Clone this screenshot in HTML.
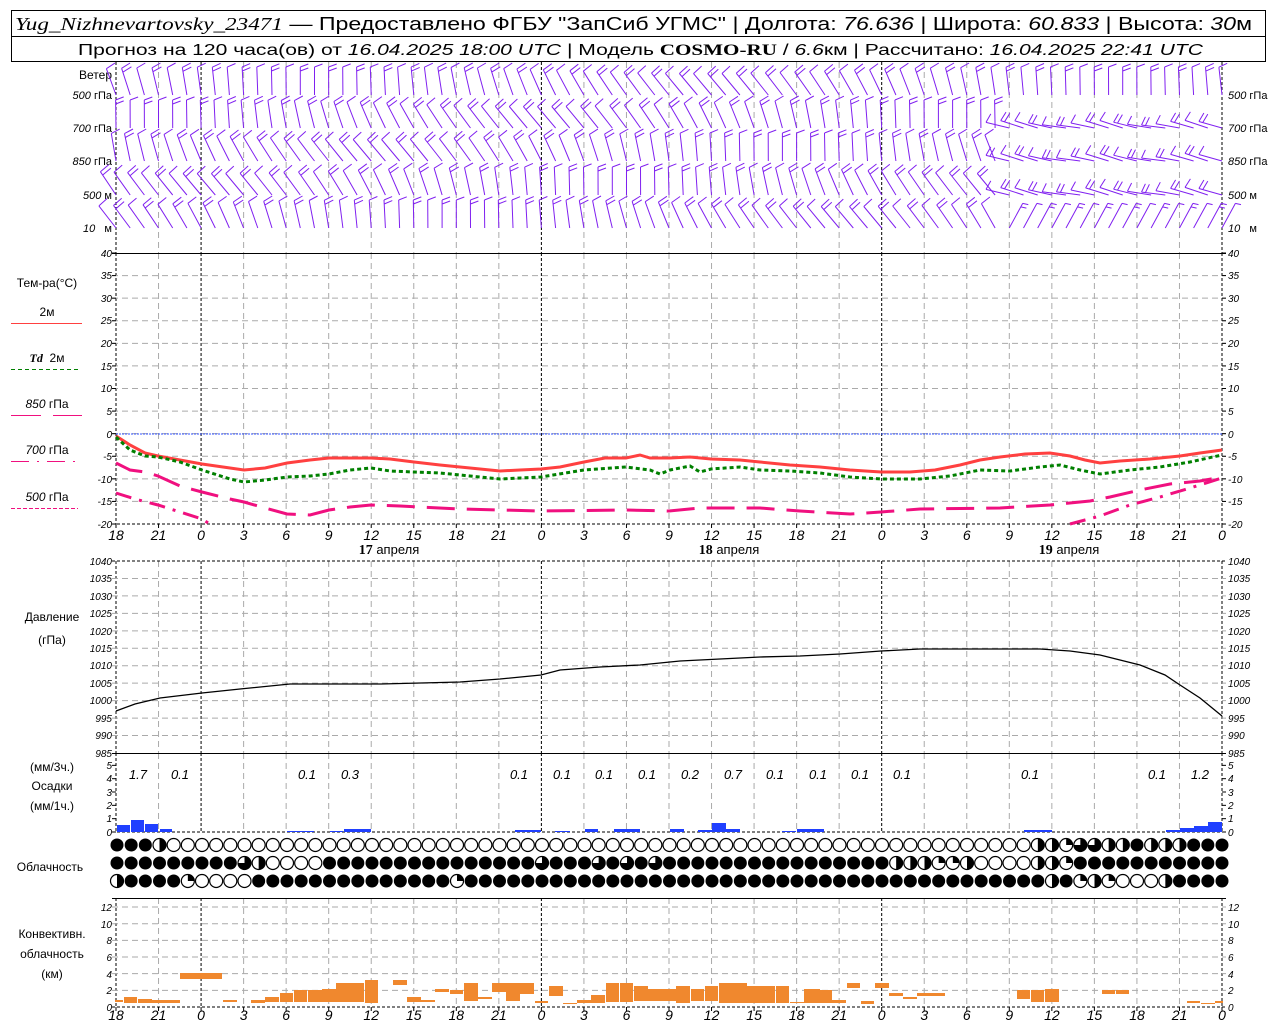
<!DOCTYPE html>
<html><head><meta charset="utf-8">
<style>
html,body{margin:0;padding:0;background:#fff;width:1280px;height:1024px;overflow:hidden}
svg{display:block}
text{font-family:"Liberation Sans",sans-serif;fill:#000}
.tl text,.tr text{font-size:10px;font-style:italic}
.tl text{text-anchor:end}
.lab{font-size:12px;text-anchor:middle}
.ax{font-size:14px;font-style:italic;text-anchor:middle}
.pr{font-size:13px;font-style:italic;text-anchor:middle}
</style></head><body>
<svg id="g" width="1280" height="1024" viewBox="0 0 1280 1024" xmlns="http://www.w3.org/2000/svg">
<rect x="11.5" y="10.5" width="1254" height="51" fill="none" stroke="#000"/>
<line x1="11" y1="36.5" x2="1265" y2="36.5" stroke="#000"/>
<text x="15" y="30" font-size="18" textLength="1237" lengthAdjust="spacingAndGlyphs"><tspan font-family="Liberation Serif" font-style="italic">Yug_Nizhnevartovsky_23471</tspan> — Предоставлено ФГБУ "ЗапСиб УГМС" | Долгота: <tspan font-style="italic">76.636</tspan> | Широта: <tspan font-style="italic">60.833</tspan> | Высота: <tspan font-style="italic">30</tspan>м</text>
<text x="78" y="55" font-size="16" textLength="1125" lengthAdjust="spacingAndGlyphs">Прогноз на 120 часа(ов) от <tspan font-style="italic">16.04.2025 18:00 UTC</tspan> | Модель <tspan font-weight="bold" font-family="Liberation Serif">COSMO-RU</tspan> / <tspan font-style="italic">6.6</tspan>км | Рассчитано: <tspan font-style="italic">16.04.2025 22:41 UTC</tspan></text>

<g id="grid"></g>

<text x="112" y="79" font-size="12" text-anchor="end">Ветер</text>
<g font-size="11" text-anchor="end">
<text x="112" y="99"><tspan font-style="italic">500</tspan> гПа</text>
<text x="112" y="132"><tspan font-style="italic">700</tspan> гПа</text>
<text x="112" y="165"><tspan font-style="italic">850</tspan> гПа</text>
<text x="112" y="199"><tspan font-style="italic">500</tspan> м</text>
<text x="112" y="232"><tspan font-style="italic">10</tspan>&#160;&#160; м</text>
</g>
<g font-size="11">
<text x="1228" y="99"><tspan font-style="italic">500</tspan> гПа</text>
<text x="1228" y="132"><tspan font-style="italic">700</tspan> гПа</text>
<text x="1228" y="165"><tspan font-style="italic">850</tspan> гПа</text>
<text x="1228" y="199"><tspan font-style="italic">500</tspan> м</text>
<text x="1228" y="232"><tspan font-style="italic">10</tspan>&#160;&#160; м</text>
</g>

<text class="lab" x="47" y="287" font-size="13">Тем-ра(°C)</text>
<text class="lab" x="47" y="316" font-size="11">2м</text>
<line x1="11" y1="323.5" x2="82" y2="323.5" stroke="#ff4040"/>
<text class="lab" x="47" y="362" font-size="11"><tspan font-style="italic" font-weight="bold" font-family="Liberation Serif">Td</tspan>&#160; 2м</text>
<line x1="11" y1="369.5" x2="78" y2="369.5" stroke="#008000" stroke-dasharray="4,3"/>
<text class="lab" x="47" y="408" font-size="11"><tspan font-style="italic">850</tspan> гПа</text>
<line x1="11" y1="415.5" x2="82" y2="415.5" stroke="#f0107f" stroke-dasharray="30,12"/>
<text class="lab" x="47" y="454" font-size="11"><tspan font-style="italic">700</tspan> гПа</text>
<line x1="11" y1="461.5" x2="78" y2="461.5" stroke="#f0107f" stroke-dasharray="18,8,2,8"/>
<text class="lab" x="47" y="501" font-size="11"><tspan font-style="italic">500</tspan> гПа</text>
<line x1="11" y1="508.5" x2="78" y2="508.5" stroke="#f0107f" stroke-dasharray="4,2"/>

<text class="lab" x="52" y="621" font-size="13">Давление</text>
<text class="lab" x="52" y="644" font-size="13">(гПа)</text>
<text class="lab" x="52" y="771" font-size="12">(мм/3ч.)</text>
<text class="lab" x="52" y="790" font-size="12">Осадки</text>
<text class="lab" x="52" y="810" font-size="12">(мм/1ч.)</text>
<text class="lab" x="50" y="871" font-size="12">Облачность</text>
<text class="lab" x="52" y="938" font-size="12">Конвективн.</text>
<text class="lab" x="52" y="958" font-size="12">облачность</text>
<text class="lab" x="52" y="978" font-size="12">(км)</text>

<g class="tl">
<text x="112" y="257">40</text><text x="112" y="279">35</text><text x="112" y="302">30</text><text x="112" y="324">25</text><text x="112" y="347">20</text><text x="112" y="370">15</text><text x="112" y="392">10</text><text x="112" y="415">5</text><text x="112" y="438">0</text><text x="112" y="460">-5</text><text x="112" y="483">-10</text><text x="112" y="505">-15</text><text x="112" y="528">-20</text>
<text x="112" y="565">1040</text><text x="112" y="582">1035</text><text x="112" y="600">1030</text><text x="112" y="617">1025</text><text x="112" y="635">1020</text><text x="112" y="652">1015</text><text x="112" y="669">1010</text><text x="112" y="687">1005</text><text x="112" y="704">1000</text><text x="112" y="722">995</text><text x="112" y="739">990</text><text x="112" y="757">985</text>
<text x="112" y="769">5</text><text x="112" y="782">4</text><text x="112" y="796">3</text><text x="112" y="809">2</text><text x="112" y="822">1</text><text x="112" y="836">0</text>
<text x="112" y="911">12</text><text x="112" y="928">10</text><text x="112" y="944">8</text><text x="112" y="961">6</text><text x="112" y="978">4</text><text x="112" y="994">2</text><text x="112" y="1011">0</text>
</g>
<g class="tr">
<text x="1228" y="257">40</text><text x="1228" y="279">35</text><text x="1228" y="302">30</text><text x="1228" y="324">25</text><text x="1228" y="347">20</text><text x="1228" y="370">15</text><text x="1228" y="392">10</text><text x="1228" y="415">5</text><text x="1228" y="438">0</text><text x="1228" y="460">-5</text><text x="1228" y="483">-10</text><text x="1228" y="505">-15</text><text x="1228" y="528">-20</text>
<text x="1228" y="565">1040</text><text x="1228" y="582">1035</text><text x="1228" y="600">1030</text><text x="1228" y="617">1025</text><text x="1228" y="635">1020</text><text x="1228" y="652">1015</text><text x="1228" y="669">1010</text><text x="1228" y="687">1005</text><text x="1228" y="704">1000</text><text x="1228" y="722">995</text><text x="1228" y="739">990</text><text x="1228" y="757">985</text>
<text x="1228" y="769">5</text><text x="1228" y="782">4</text><text x="1228" y="796">3</text><text x="1228" y="809">2</text><text x="1228" y="822">1</text><text x="1228" y="836">0</text>
<text x="1228" y="911">12</text><text x="1228" y="928">10</text><text x="1228" y="944">8</text><text x="1228" y="961">6</text><text x="1228" y="978">4</text><text x="1228" y="994">2</text><text x="1228" y="1011">0</text>
</g>

<g class="ax">
<text x="116" y="540">18</text><text x="158.5" y="540">21</text><text x="201" y="540">0</text><text x="243.6" y="540">3</text><text x="286.2" y="540">6</text><text x="328.7" y="540">9</text><text x="371.2" y="540">12</text><text x="413.8" y="540">15</text><text x="456.3" y="540">18</text><text x="498.9" y="540">21</text><text x="541.4" y="540">0</text><text x="583.9" y="540">3</text><text x="626.5" y="540">6</text><text x="669" y="540">9</text><text x="711.6" y="540">12</text><text x="754.1" y="540">15</text><text x="796.6" y="540">18</text><text x="839.2" y="540">21</text><text x="881.7" y="540">0</text><text x="924.3" y="540">3</text><text x="966.8" y="540">6</text><text x="1009.3" y="540">9</text><text x="1051.9" y="540">12</text><text x="1094.4" y="540">15</text><text x="1137" y="540">18</text><text x="1179.5" y="540">21</text><text x="1222" y="540">0</text>
</g>
<g class="ax">
<text x="116" y="1020">18</text><text x="158.5" y="1020">21</text><text x="201" y="1020">0</text><text x="243.6" y="1020">3</text><text x="286.2" y="1020">6</text><text x="328.7" y="1020">9</text><text x="371.2" y="1020">12</text><text x="413.8" y="1020">15</text><text x="456.3" y="1020">18</text><text x="498.9" y="1020">21</text><text x="541.4" y="1020">0</text><text x="583.9" y="1020">3</text><text x="626.5" y="1020">6</text><text x="669" y="1020">9</text><text x="711.6" y="1020">12</text><text x="754.1" y="1020">15</text><text x="796.6" y="1020">18</text><text x="839.2" y="1020">21</text><text x="881.7" y="1020">0</text><text x="924.3" y="1020">3</text><text x="966.8" y="1020">6</text><text x="1009.3" y="1020">9</text><text x="1051.9" y="1020">12</text><text x="1094.4" y="1020">15</text><text x="1137" y="1020">18</text><text x="1179.5" y="1020">21</text><text x="1222" y="1020">0</text>
</g>
<g font-size="13" text-anchor="middle">
<text x="389" y="554"><tspan font-weight="bold" font-family="Liberation Serif" font-size="14">17</tspan> апреля</text>
<text x="729" y="554"><tspan font-weight="bold" font-family="Liberation Serif" font-size="14">18</tspan> апреля</text>
<text x="1069" y="554"><tspan font-weight="bold" font-family="Liberation Serif" font-size="14">19</tspan> апреля</text>
</g>

<g class="pr">
<text x="138" y="779">1.7</text><text x="180" y="779">0.1</text><text x="307" y="779">0.1</text><text x="350" y="779">0.3</text><text x="519" y="779">0.1</text><text x="562" y="779">0.1</text><text x="604" y="779">0.1</text><text x="647" y="779">0.1</text><text x="690" y="779">0.2</text><text x="733" y="779">0.7</text><text x="775" y="779">0.1</text><text x="818" y="779">0.1</text><text x="860" y="779">0.1</text><text x="902" y="779">0.1</text><text x="1030" y="779">0.1</text><text x="1157" y="779">0.1</text><text x="1200" y="779">1.2</text>
</g>

<line x1="116" y1="434" x2="1222" y2="434" stroke="#3050ff" stroke-dasharray="2,1"/>
<polyline fill="none" stroke="#ff4040" stroke-width="3" points="116,436 130,445 145,453 158,456 180,460 202,464 230,468 244,470 265,468 287,463 310,460 329,458 350,458 371,458 390,459 414,462 440,465 460,467 500,471 520,470 541,469 560,467 584,462 605,458 626,458 640,455 650,458 670,458 690,457 711,459 740,460 760,462 790,465 820,467 850,470 881,472 910,472 935,470 960,465 980,460 1000,457 1025,454 1050,453 1070,456 1085,460 1100,463 1120,461 1150,459 1180,456 1200,453 1222,450"/>
<polyline fill="none" stroke="#008000" stroke-width="3" stroke-dasharray="4,3" points="116,437 130,450 145,456 158,457 180,462 202,470 230,479 244,482 265,480 287,477 310,476 329,474 350,470 371,468 390,471 414,472 440,473 460,475 500,479 541,477 584,470 626,467 650,470 660,474 670,470 690,466 700,472 711,469 740,467 760,470 790,471 820,473 850,477 881,479 920,479 950,476 980,470 1010,471 1040,467 1060,465 1080,470 1100,474 1130,470 1160,467 1190,462 1222,455"/>
<polyline fill="none" stroke="#f0107f" stroke-width="3" stroke-dasharray="28,12" points="116,463 130,470 145,472 158,476 180,486 202,492 230,499 244,502 265,508 287,514 310,515 329,510 350,507 371,505 400,506 460,509 541,511 626,510 669,511 700,508 760,508 800,511 850,514 881,512 920,509 1000,508 1050,505 1090,501 1110,497 1140,490 1170,484 1200,481 1222,477"/>
<polyline fill="none" stroke="#f0107f" stroke-width="3" stroke-dasharray="16,8,3,8" points="116,493 135,499 158,505 180,512 202,519 213,526"/>
<polyline fill="none" stroke="#f0107f" stroke-width="3" stroke-dasharray="16,8,3,8" points="1070,524 1100,516 1130,505 1160,497 1190,488 1222,478"/>
<polyline fill="none" stroke="#000" stroke-width="1.3" points="116,711 135,704 160,698 202,693 240,689 290,684 380,684 460,682 500,679 541,675 560,670 600,667 640,665 680,661 720,659 760,657 800,656 840,654 881,651 920,649 1040,649 1070,651 1100,655 1140,665 1165,675 1180,685 1200,698 1222,716"/>
<g id="bars"></g>
<g id="barbs" stroke="#8020f0" stroke-width="1" fill="none"></g>
<g id="clouds"></g>
</svg>
<script>
const NS='http://www.w3.org/2000/svg';
function el(t,a,p){const e=document.createElementNS(NS,t);for(const k in a)e.setAttribute(k,a[k]);p.appendChild(e);return e;}
const G=document.getElementById('grid');
const gx=k=>116+k*1106/26;
const panels=[[62,253],[253,524],[561,753],[753,832],[898,1007]];
for(let k=0;k<=26;k++){const x=gx(k);const day=(k%8==2)||k==0||k==26;
 for(const [a,b] of panels){el('line',{x1:x,y1:a,x2:x,y2:b,stroke:day?'#000':'#aaa','stroke-dasharray':day?'3,2':'6,4'},G);}
 el('line',{x1:x,y1:524,x2:x,y2:528,stroke:'#000'},G);el('line',{x1:x,y1:1007,x2:x,y2:1011,stroke:'#000'},G);
}
function hl(y,solid,black){el('line',{x1:112,y1:y,x2:1226,y2:y,stroke:black?'#000':'#aaa','stroke-dasharray':solid?'none':(black?'3,2':'6,4')},G);}
for(let t=35;t>=-15;t-=5){hl(253+(40-t)*4.517,false,false);}
for(let p=1035;p>=990;p-=5){hl(561+(1040-p)*192/55,false,false);}
for(let c=2;c<=12;c+=2){hl(1007-c*8.33,false,false);}
hl(253.5,true,true);hl(524,false,true);hl(561,false,true);hl(753.5,true,true);hl(832,false,true);hl(898.5,true,true);hl(1007,false,true);
for(let t=40;t>=-20;t-=5){const y=253+(40-t)*4.517;el('line',{x1:112,y1:y,x2:116,y2:y,stroke:'#000'},G);el('line',{x1:1222,y1:y,x2:1226,y2:y,stroke:'#000'},G);}
for(let i=0;i<=5;i++){const y=832-i*13.33;el('line',{x1:112,y1:y,x2:116,y2:y,stroke:'#000'},G);el('line',{x1:1222,y1:y,x2:1226,y2:y,stroke:'#000'},G);}
const B=document.getElementById('bars');
const pb=[[117,130,825],[131,144,820],[145,158,824],[160,172,829],[287,314,831],[330,343,831],[344,371,829],[515,541,830],[555,570,831],[585,598,829],[614,640,829],[670,684,829],[698,712,830],[712,726,823],[726,740,829],[782,796,831],[797,824,829],[1024,1052,830],[1166,1180,830],[1180,1194,828],[1194,1208,826],[1208,1222,822]];
for(const [a,b,y] of pb)el('rect',{x:a,y:y,width:b-a,height:832-y,fill:'#2040ff'},B);
const cb=[[115,123,1000,1002],[124,137,997,1003],[138,152,999,1003],[152,180,1000,1003],[180,222,973,979],[223,237,1000,1002],[251,265,1000,1003],[265,279,997,1002],[280,293,993,1002],[294,307,990,1002],[308,322,990,1002],[322,336,989,1002],[336,364,983,1002],[365,378,980,1003],[393,407,980,985],[407,421,997,1002],[421,435,1000,1002],[435,449,989,992],[450,463,990,994],[464,478,983,1001],[478,492,997,999],[492,506,983,992],[506,520,983,1001],[520,534,983,994],[535,548,1001,1003],[549,563,986,996],[563,577,1003,1004],[577,591,1000,1003],[591,605,995,1003],[606,619,983,1002],[620,633,983,1002],[634,648,986,1001],[648,676,989,1001],[676,690,986,1003],[691,704,989,1001],[705,718,986,1001],[719,747,983,1003],[747,775,986,1003],[776,789,986,1003],[790,804,1002,1003],[804,820,989,1003],[820,832,990,1003],[832,846,1000,1003],[847,860,983,988],[861,874,1001,1004],[875,889,983,988],[889,903,993,996],[903,917,997,999],[917,945,993,996],[1017,1030,990,999],[1031,1044,990,1002],[1045,1059,989,1002],[1102,1115,990,994],[1116,1129,990,994],[1187,1200,1001,1003],[1201,1215,1003,1004],[1215,1223,1001,1003]];
for(const [a,b,t,bt] of cb)el('rect',{x:a,y:t,width:b-a,height:Math.max(1,bt-t),fill:'#f0882e'},B);
const W=document.getElementById('barbs');
const rows=[95,128,161,195,228];
for(let l=0;l<5;l++){for(let h=0;h<=78;h++){
 const x=116+h*1106/78, y=rows[l];
 let a=-0.35+0.35*Math.sin(h/9+l*1.3);
 let L=28;
 if(h>62&&l>0&&l<4){a=-1.35+0.1*Math.sin(h);L=24;}
 if(h>62&&l==4){a=0.5;}
 const ex=x+L*Math.sin(a), ey=y-L*Math.cos(a);
 let d='M'+x.toFixed(1)+' '+y+' L'+ex.toFixed(1)+' '+ey.toFixed(1);
 const n=1+((h+l)%2);
 for(let i=0;i<n;i++){const px=ex-i*4*Math.sin(a),py=ey+i*4*Math.cos(a);
  const tx=px+8*Math.cos(a)-3*Math.sin(a),ty=py+8*Math.sin(a)-3*Math.cos(a);
  d+=' M'+px.toFixed(1)+' '+py.toFixed(1)+' L'+tx.toFixed(1)+' '+ty.toFixed(1);}
 el('path',{d:d},W);
}}
const C=document.getElementById('clouds');
const r1='FFFH'+'E'.repeat(61)+'HHqQQHHFHHHFFF';
const r2='F'.repeat(9)+'QH'+'E'.repeat(4)+'F'.repeat(15)+'Q'+'FFF'+'QFQFQ'+'F'.repeat(16)+'HHHqqH'+'E'.repeat(4)+'HHq'+'F'.repeat(12);
const r3='H'+'F'.repeat(4)+'q'+'E'.repeat(4)+'F'.repeat(14)+'q'+'F'.repeat(41)+'HFqHq'+'EEE'+'H'+'FFFF';
const ys=[845,863,881],R=6.5;
[r1,r2,r3].forEach((s,ri)=>{for(let i=0;i<79;i++){const c=s[i]||'F';const cx=117+i*1105/78,cy=ys[ri];
 if(c=='F'){el('circle',{cx,cy,r:R,fill:'#000'},C);continue;}
 el('circle',{cx,cy,r:R,fill:'#fff',stroke:'#000','stroke-width':1.2},C);
 if(c=='H'){el('path',{d:`M${cx} ${cy-R} A${R} ${R} 0 0 1 ${cx} ${cy+R} Z`,fill:'#000'},C);}
 else if(c=='q'){el('path',{d:`M${cx} ${cy} L${cx} ${cy-R} A${R} ${R} 0 0 1 ${cx+R} ${cy} Z`,fill:'#000'},C);}
 else if(c=='Q'){el('path',{d:`M${cx} ${cy} L${cx} ${cy-R} A${R} ${R} 0 1 1 ${cx-R} ${cy} Z`,fill:'#000'},C);}
}});
</script>
</body></html>
